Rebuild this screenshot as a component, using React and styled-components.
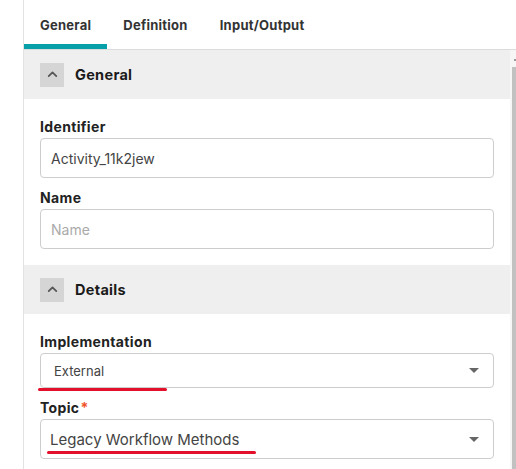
import React from 'react';
import styled, { createGlobalStyle } from 'styled-components';

const GlobalStyle = createGlobalStyle`
  html, body {
    margin: 0;
    padding: 0;
    background: #fff;
    font-family: Inter, "Open Sans", sans-serif;
  }
`;

const Page = styled.div`
  display: flex;
  width: 516px;
  height: 469px;
  overflow: hidden;
`;

const Gutter = styled.div`
  width: 23px;
  flex: none;
  border-right: 1px solid #e2e2e2;
`;

const Panel = styled.div`
  flex: 1;
  display: flex;
  flex-direction: column;
  min-width: 0;
`;

const TabBar = styled.div`
  display: flex;
  height: 49px;
  flex: none;
  border-bottom: 1px solid #dcdcdc;
`;

const Tab = styled.div`
  display: flex;
  align-items: center;
  padding: 0 16px;
  font-size: 13px;
  font-weight: 700;
  color: #333;
  letter-spacing: 0.25px;
  box-shadow: ${(p) => (p.$active ? 'inset 0 -5px 0 #07a0a8' : 'none')};
`;

const Body = styled.div`
  flex: 1;
  display: flex;
  min-height: 0;
`;

const Content = styled.div`
  flex: 1;
  min-width: 0;
`;

const Scrollbar = styled.div`
  width: 6px;
  flex: none;
  background: #f6f6f6;
  position: relative;
`;

const Thumb = styled.div`
  margin: 17px 0 0 2px;
  height: 100%;
  background: #c1c1c1;
`;

const ArrowDot = styled.div`
  position: absolute;
  top: 9px;
  right: 0;
  width: 2px;
  height: 2px;
  background: #9a9a9a;
`;

const SectionHeader = styled.div`
  display: flex;
  align-items: center;
  gap: 11px;
  height: 49px;
  padding: 0 16px;
  background: #efefef;
`;

const Collapse = styled.div`
  width: 24px;
  height: 24px;
  display: flex;
  align-items: center;
  justify-content: center;
  background: #d5d5d5;
`;

const SectionTitle = styled.div`
  font-size: 14.5px;
  font-weight: 700;
  color: #1b1b1b;
  letter-spacing: 0.3px;
  margin-top: -1px;
`;

const SectionBody = styled.div`
  padding: 18px 16px 16px;
`;

const Field = styled.div`
  position: relative;
  & + & {
    margin-top: 10px;
  }
`;

const Label = styled.div`
  height: 21px;
  line-height: 20px;
  font-size: 14px;
  font-weight: 700;
  color: #222;
  letter-spacing: 0.35px;
`;

const Required = styled.span`
  color: #f0532a;
  margin-left: 1px;
`;

const Box = styled.div`
  display: flex;
  align-items: center;
  height: ${(p) => p.$h}px;
  box-sizing: border-box;
  padding: 0 14px 0 ${(p) => p.$pl}px;
  border: 1px solid #cdcdcd;
  border-radius: 4px;
  font-size: ${(p) => p.$fs}px;
  color: ${(p) => (p.$placeholder ? '#aaa' : '#444')};
`;

const Value = styled.span`
  flex: 1;
`;

const Caret = styled.span`
  width: 0;
  height: 0;
  border-left: 5px solid transparent;
  border-right: 5px solid transparent;
  border-top: 5px solid #666;
`;

const Mark = styled.span`
  position: absolute;
  height: 3px;
  border-radius: 2px;
  background: #e3102c;
  left: ${(p) => p.$left}px;
  top: ${(p) => p.$top}px;
  width: ${(p) => p.$w}px;
`;

const Chevron = () => (
  <svg width="13" height="13" viewBox="0 0 24 24" fill="none" stroke="#555" strokeWidth="3.2" strokeLinecap="round" strokeLinejoin="round">
    <polyline points="5 15 12 8 19 15" />
  </svg>
);

export default function App() {
  return (
    <>
      <GlobalStyle />
      <Page>
        <Gutter />
        <Panel>
          <TabBar>
            <Tab $active>General</Tab>
            <Tab>Definition</Tab>
            <Tab>Input/Output</Tab>
          </TabBar>
          <Body>
            <Content>
              <SectionHeader>
                <Collapse><Chevron /></Collapse>
                <SectionTitle>General</SectionTitle>
              </SectionHeader>
              <SectionBody>
                <Field>
                  <Label>Identifier</Label>
                  <Box $h={40} $pl={10} $fs={14}>
                    <Value>Activity_11k2jew</Value>
                  </Box>
                </Field>
                <Field>
                  <Label>Name</Label>
                  <Box $h={40} $pl={10} $fs={14} $placeholder>
                    <Value>Name</Value>
                  </Box>
                </Field>
              </SectionBody>
              <SectionHeader>
                <Collapse><Chevron /></Collapse>
                <SectionTitle>Details</SectionTitle>
              </SectionHeader>
              <SectionBody>
                <Field>
                  <Label>Implementation</Label>
                  <Box $h={35} $pl={13} $fs={13}>
                    <Value>External</Value>
                    <Caret />
                  </Box>
                  <Mark $left={-2} $top={56} $w={129} />
                </Field>
                <Field>
                  <Label>Topic<Required>*</Required></Label>
                  <Box $h={40} $pl={9} $fs={15}>
                    <Value>Legacy Workflow Methods</Value>
                    <Caret />
                  </Box>
                  <Mark $left={7} $top={53} $w={209} />
                </Field>
              </SectionBody>
            </Content>
            <Scrollbar>
              <ArrowDot />
              <Thumb />
            </Scrollbar>
          </Body>
        </Panel>
      </Page>
    </>
  );
}
